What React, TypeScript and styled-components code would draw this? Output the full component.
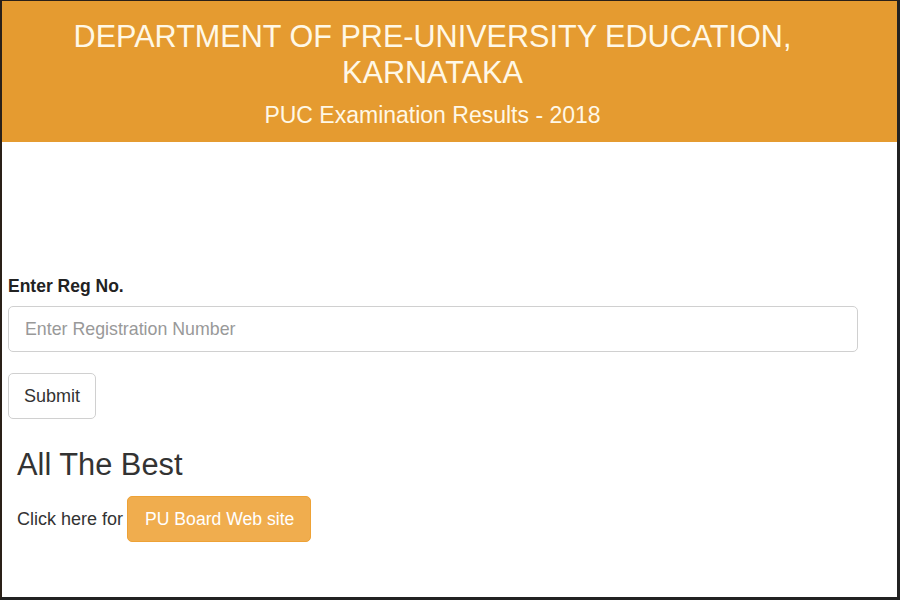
import React from "react";
import styled, { createGlobalStyle } from "styled-components";

const Global = createGlobalStyle`
  html, body { margin: 0; padding: 0; background: #fff; }
  body { font-family: "Liberation Sans", Arial, sans-serif; }
  * { box-sizing: border-box; }
`;

const Frame = styled.div`
  width: 900px;
  height: 600px;
  border-top: 1px solid #2a2018;
  border-left: 2px solid #2a2018;
  border-right: 3px solid #222;
  border-bottom: 3px solid #222;
  overflow: hidden;
  display: flex;
  flex-direction: column;
`;

const Header = styled.header`
  background: #e59b30;
  height: 141px;
  display: flex;
  flex-direction: column;
  align-items: center;
  padding: 17px 34px 0 0;
  color: #fff8e6;
  text-align: center;
`;

const Title = styled.h1`
  margin: 0;
  font-weight: 400;
  font-size: 30.6px;
  line-height: 36px;
  width: 800px;
`;

const Subtitle = styled.h2`
  margin: 11px 0 0;
  font-weight: 400;
  font-size: 23px;
  line-height: 28px;
`;

const Main = styled.main`
  padding: 133px 40px 0 6px;
  display: flex;
  flex-direction: column;
`;

const Label = styled.label`
  font-weight: 700;
  font-size: 17.5px;
  color: #222;
  line-height: 22px;
`;

const Input = styled.input`
  margin-top: 9px;
  width: 850px;
  height: 46px;
  border: 1px solid #d0d0d0;
  border-radius: 5px;
  padding: 0 16px;
  font-family: "Liberation Sans", Arial, sans-serif;
  font-size: 17.8px;
  color: #555;
  &::placeholder { color: #999; }
`;

const SubmitButton = styled.button`
  margin-top: 21px;
  align-self: flex-start;
  height: 46px;
  padding: 0 15px;
  background: #fff;
  border: 1px solid #d0d0d0;
  border-radius: 5px;
  font-family: "Liberation Sans", Arial, sans-serif;
  font-size: 18px;
  color: #333;
`;

const Heading = styled.h3`
  margin: 29px 0 0 9px;
  font-weight: 400;
  font-size: 30.8px;
  line-height: 34px;
  color: #333;
`;

const LinkRow = styled.div`
  margin: 14px 0 0 9px;
  display: flex;
  align-items: center;
  gap: 4px;
  font-size: 18px;
  color: #333;
`;

const WarningButton = styled.a`
  display: inline-flex;
  align-items: center;
  height: 46px;
  padding: 0 16px 0 17px;
  background: #f0ad4e;
  border: 1px solid #eea236;
  border-radius: 5px;
  color: #fff;
  text-decoration: none;
  font-size: 17.6px;
`;

export default function App() {
  return (
    <>
      <Global />
      <Frame>
        <Header>
          <Title>DEPARTMENT OF PRE-UNIVERSITY EDUCATION, KARNATAKA</Title>
          <Subtitle>PUC Examination Results - 2018</Subtitle>
        </Header>
        <Main>
          <Label htmlFor="reg">Enter Reg No.</Label>
          <Input id="reg" placeholder="Enter Registration Number" />
          <SubmitButton>Submit</SubmitButton>
          <Heading>All The Best</Heading>
          <LinkRow>
            Click here for <WarningButton href="#">PU Board Web site</WarningButton>
          </LinkRow>
        </Main>
      </Frame>
    </>
  );
}
